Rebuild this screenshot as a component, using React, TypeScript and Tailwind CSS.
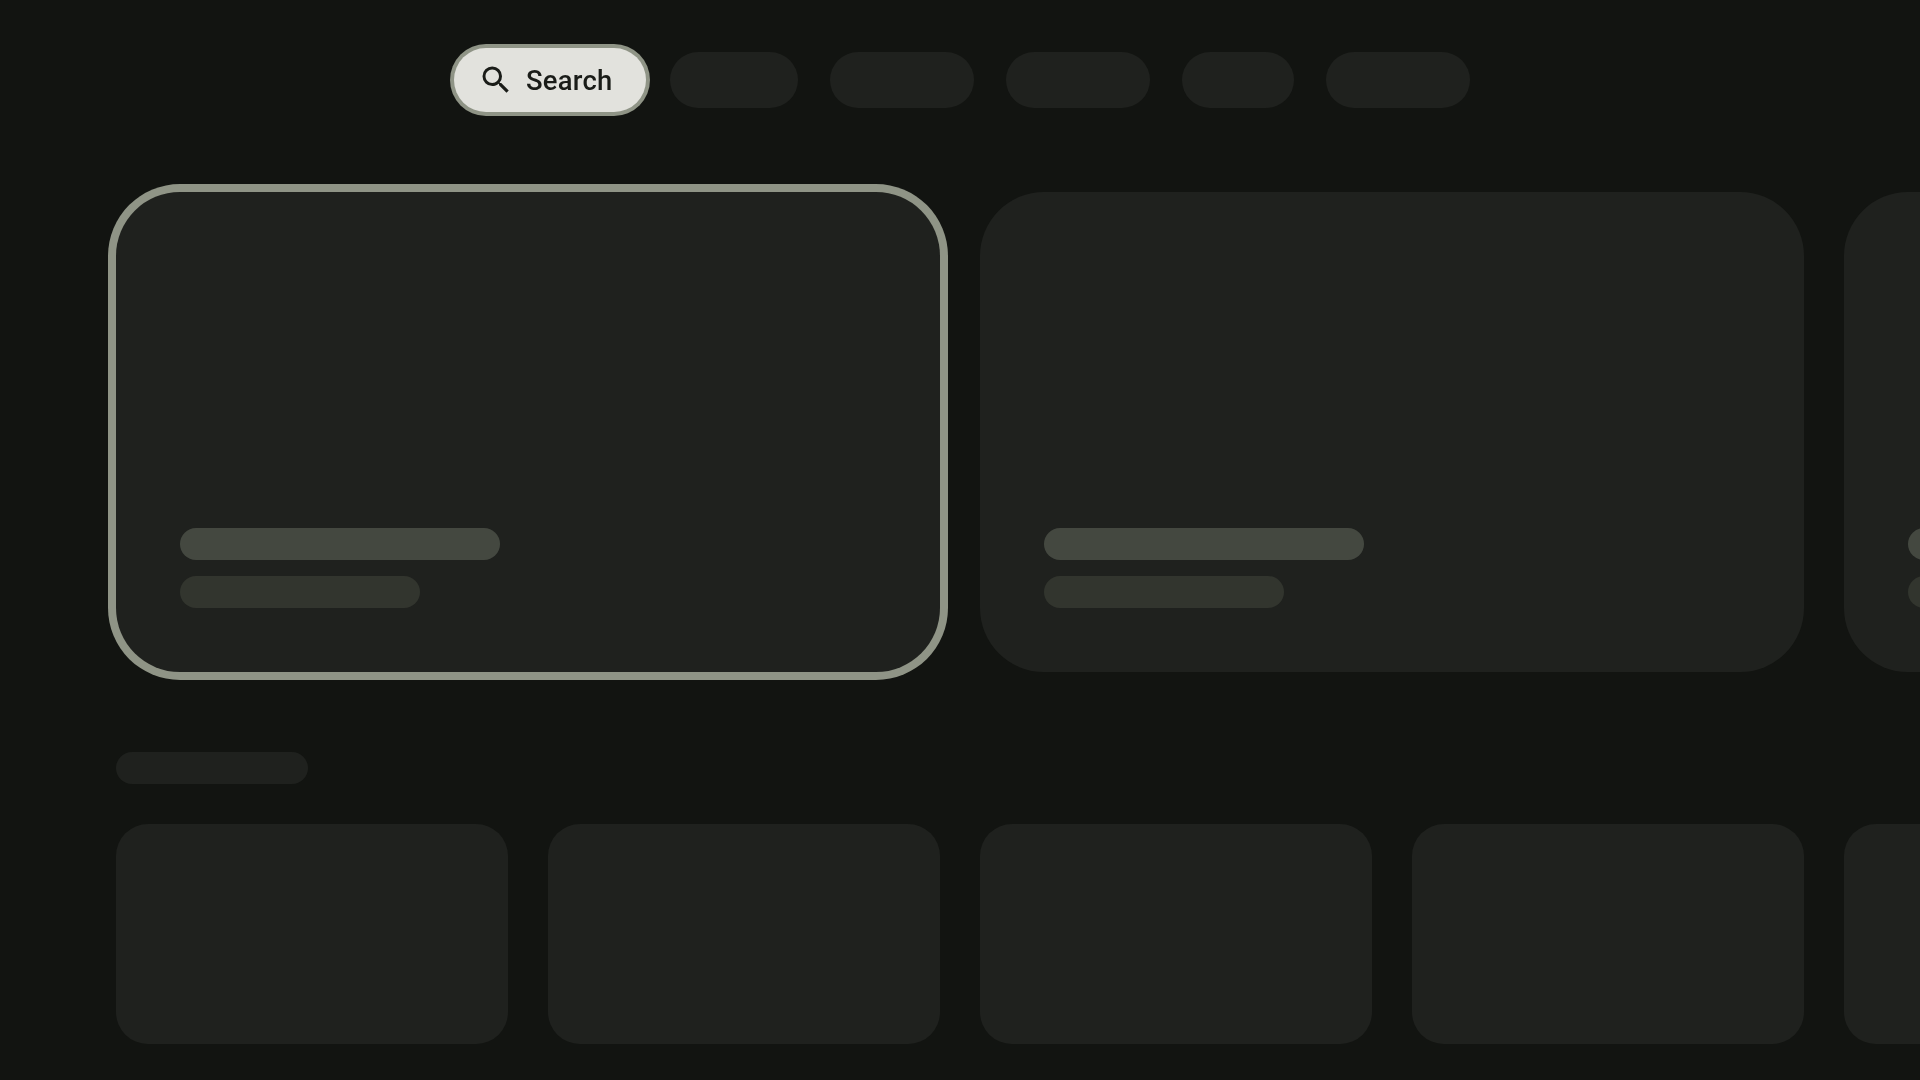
import { MdSearch } from "react-icons/md"

const NAV_PILLS = ["w-[128px]", "w-[144px]", "w-[144px]", "w-[112px]", "w-[144px]"]

function FeatureCard({ focused = false }: { focused?: boolean }) {
  return (
    <div
      className={`flex h-[480px] w-[824px] shrink-0 flex-col justify-end gap-4 rounded-[64px] bg-[#1f211e] p-16 ${
        focused ? "ring-8 ring-[#8f9486]" : ""
      }`}
    >
      <div className="h-8 w-[320px] rounded-2xl bg-[#444840]" />
      <div className="h-8 w-[240px] rounded-2xl bg-[#32352e]" />
    </div>
  )
}

export default function App() {
  return (
    <div className="h-[1080px] w-[1920px] overflow-hidden bg-[#121411] font-['Roboto',sans-serif]">
      <header className="flex h-40 items-center pl-[454px]">
        <button className="mr-6 flex h-16 w-48 shrink-0 items-center gap-3 rounded-full bg-[#e2e2dd] pr-8 pl-6 text-2xl leading-8 font-medium tracking-[0.2px] text-[#1a1c18] ring-4 ring-[#8f9486]">
          <MdSearch className="size-9 shrink-0" />
          <span className="origin-left translate-y-px scale-[1.1428] will-change-transform">Search</span>
        </button>
        <div className="flex gap-8">
          {NAV_PILLS.map((w, i) => (
            <div key={i} className={`h-14 rounded-full bg-[#1f211e] ${w}`} />
          ))}
        </div>
      </header>

      <main className="pt-8 pl-[116px]">
        <div className="flex gap-10">
          <FeatureCard focused />
          <FeatureCard />
          <FeatureCard />
        </div>

        <div className="mt-20 h-8 w-48 rounded-2xl bg-[#1f211e]" />

        <div className="mt-10 flex gap-10">
          {[0, 1, 2, 3, 4].map((i) => (
            <div key={i} className="h-[220px] w-[392px] shrink-0 rounded-[32px] bg-[#1f211e]" />
          ))}
        </div>
      </main>
    </div>
  )
}
